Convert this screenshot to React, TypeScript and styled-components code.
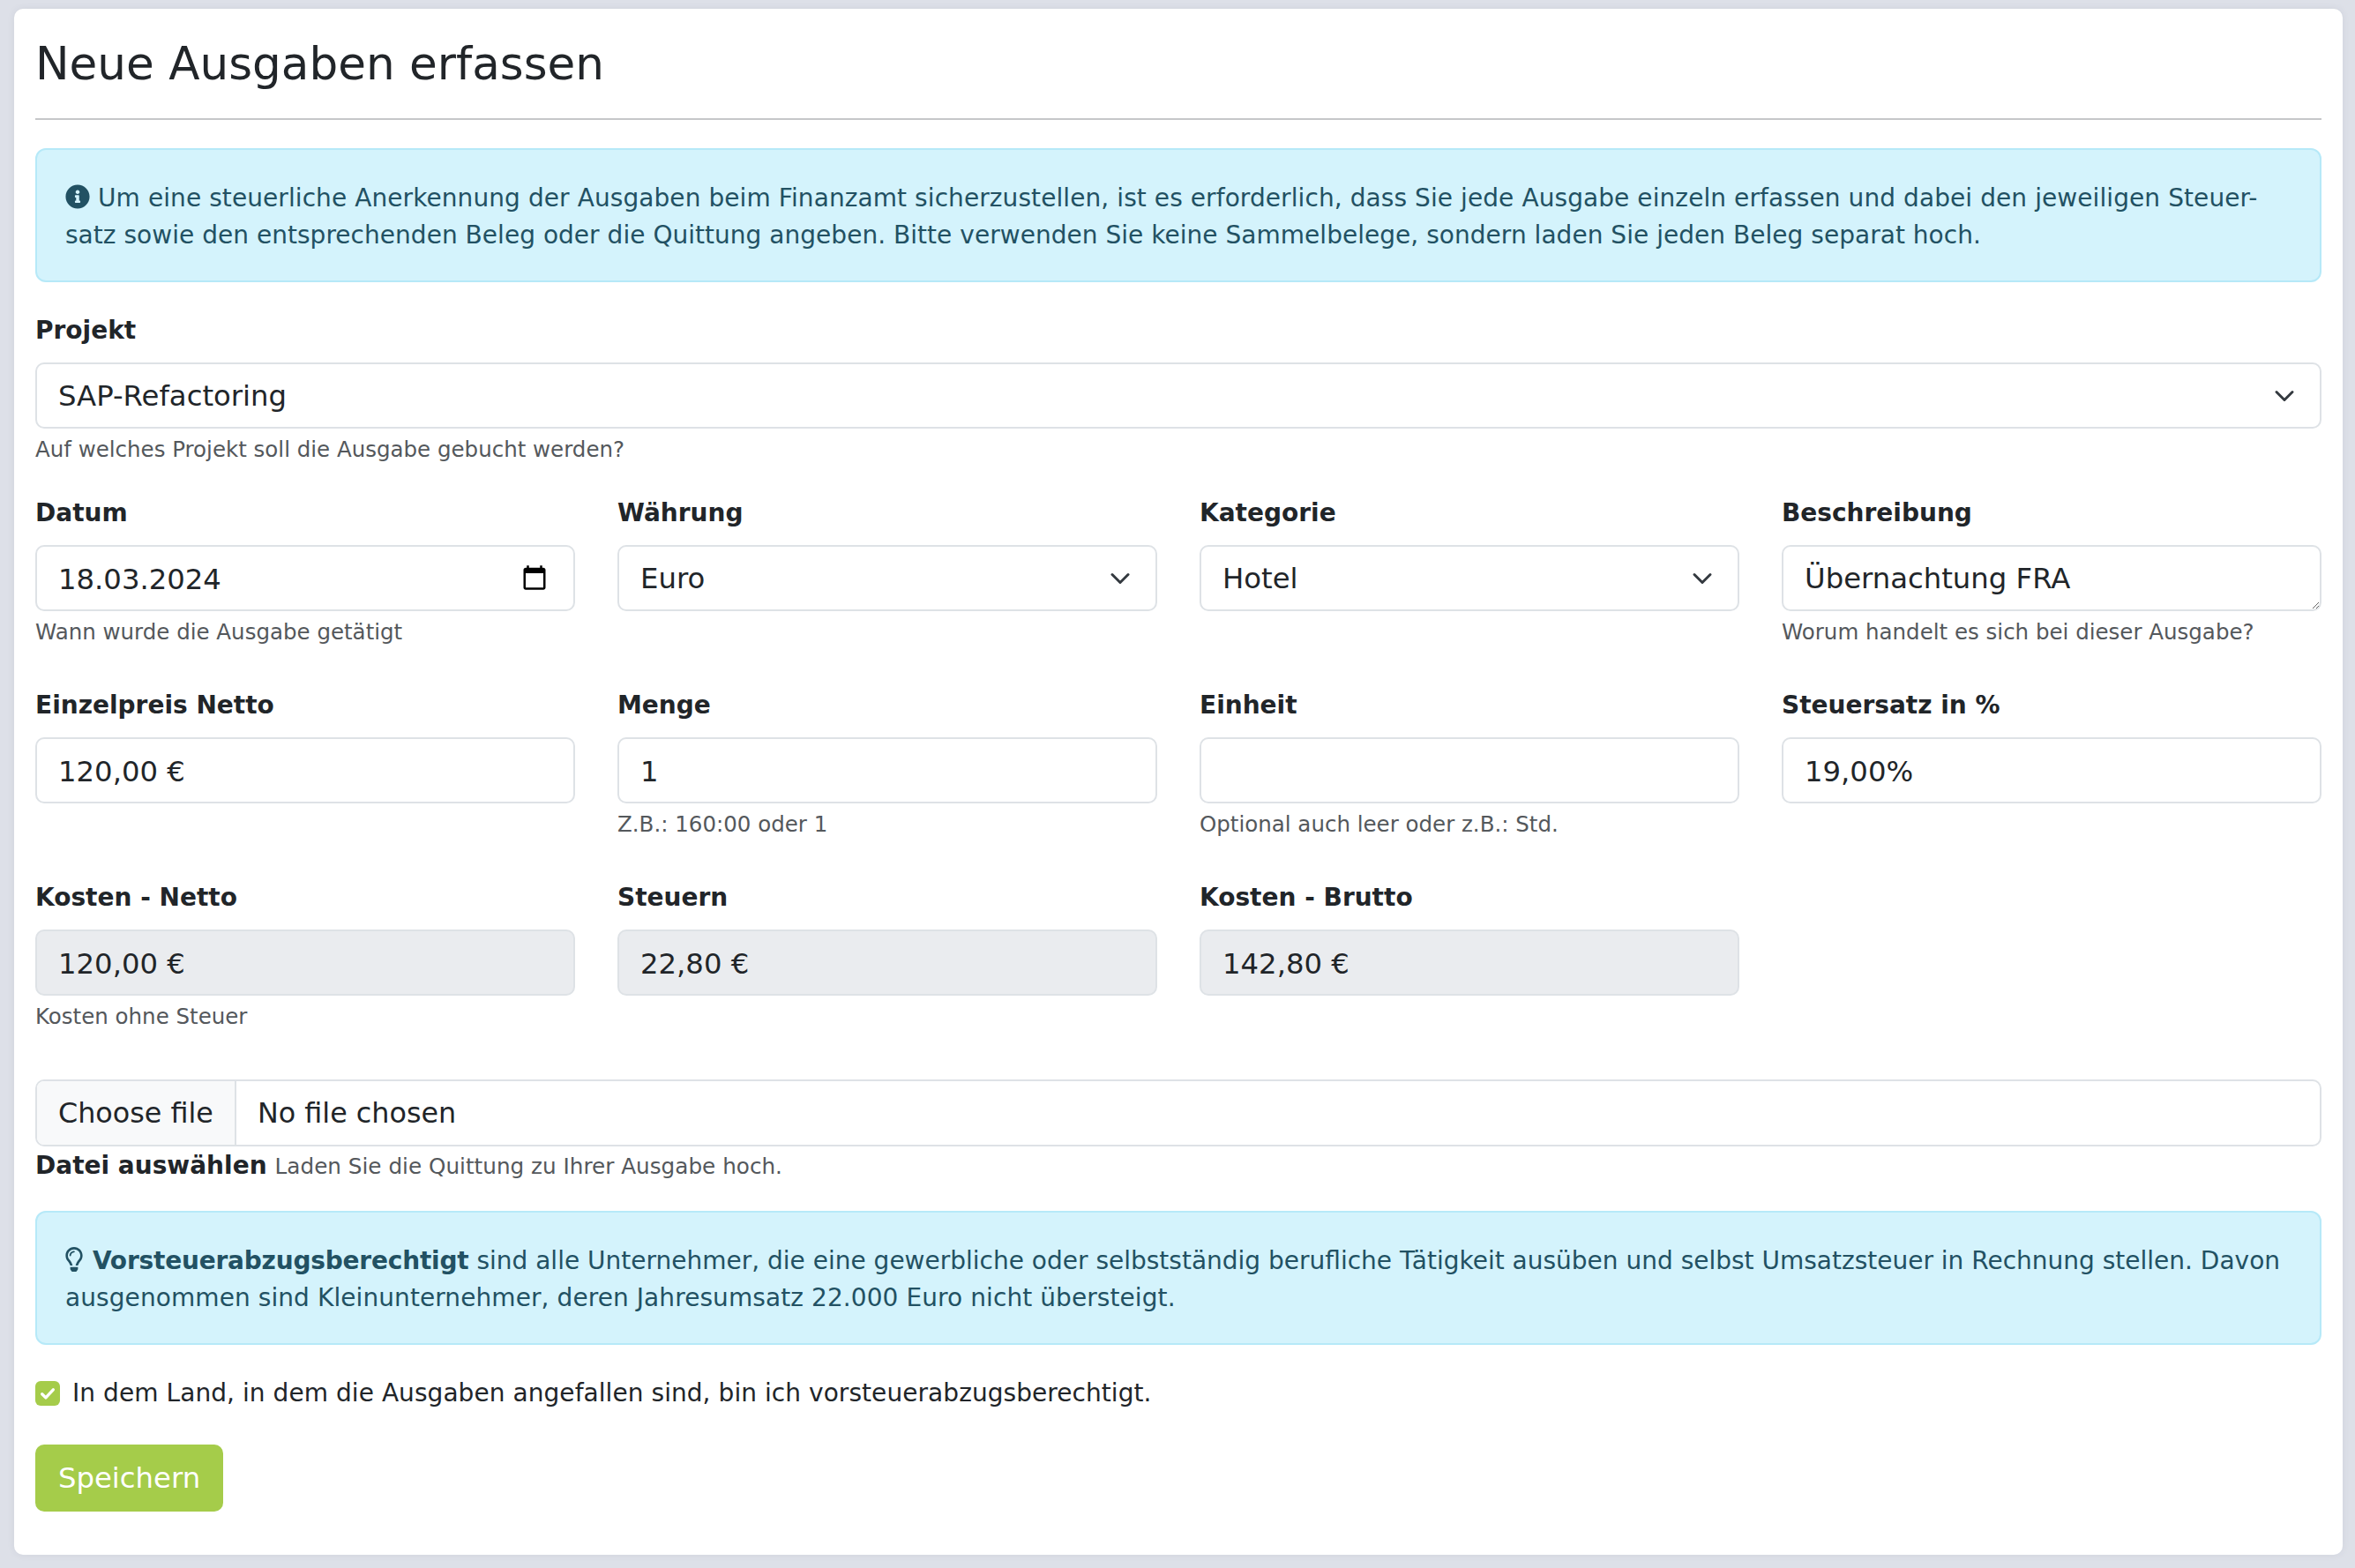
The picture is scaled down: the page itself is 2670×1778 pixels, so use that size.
import React from "react";
import styled, { createGlobalStyle } from "styled-components";
import { FaInfoCircle, FaRegLightbulb } from "react-icons/fa";

const GlobalStyle = createGlobalStyle`
  html, body {
    margin: 0;
    padding: 0;
    background: #dde0e8;
  }
  * {
    box-sizing: border-box;
  }
`;

const chevron =
  "url(\"data:image/svg+xml,%3csvg xmlns='http://www.w3.org/2000/svg' viewBox='0 0 16 16'%3e%3cpath fill='none' stroke='%23343a40' stroke-linecap='round' stroke-linejoin='round' stroke-width='2' d='m2 5 6 6 6-6'/%3e%3c/svg%3e\")";

const Page = styled.div`
  padding: 10px 14px 14px 16px;
  font-family: "DejaVu Sans", Verdana, sans-serif;
  font-size: 28px;
  line-height: 42px;
  color: #212529;
`;

const Card = styled.main`
  background: #fff;
  border-radius: 10px;
  padding: 24px 24px 49px;
  box-shadow: 0 0 8px rgba(60, 70, 90, 0.08);
`;

const Title = styled.h1`
  margin: 0;
  font-size: 51.6px;
  line-height: 76px;
  font-weight: 400;
`;

const Rule = styled.hr`
  margin: 24px 0 32px;
  border: 0;
  height: 2px;
  background: #c6c7c9;
`;

const Alert = styled.div`
  padding: 34px 32px 30px;
  background: #d4f3fc;
  border: 2px solid #b6e9f8;
  border-radius: 12px;
  color: #225163;
  svg {
    vertical-align: -3px;
  }
`;

const AlertLine = styled.span<{ $spacing: number }>`
  letter-spacing: ${(p) => p.$spacing}px;
`;

const AlertStrong = styled.b`
  letter-spacing: -0.2px;
`;

const BulbIcon = styled(FaRegLightbulb)`
  margin: 0 -2px 0 -4px;
`;

const Form = styled.form`
  display: flex;
  flex-direction: column;
`;

const ProjectField = styled.div`
  margin-top: 34px;
`;

const Grid = styled.div<{ $first?: boolean }>`
  display: grid;
  grid-template-columns: repeat(4, 1fr);
  column-gap: 48px;
  margin-top: ${(p) => (p.$first ? "33px" : "44px")};
`;

const Field = styled.div`
  display: flex;
  flex-direction: column;
  min-width: 0;
`;

const Label = styled.label`
  font-weight: 700;
  margin-bottom: 15px;
`;

const controlBase = `
  display: block;
  width: 100%;
  height: 75px;
  padding: 14px 24px 12px;
  font-family: "DejaVu Sans", Verdana, sans-serif;
  font-size: 32.3px;
  line-height: 45px;
  color: #212529;
  background-color: #fff;
  border: 2px solid #dee2e6;
  border-radius: 10px;
  outline: none;
`;

const Input = styled.input<{ $muted?: boolean }>`
  ${controlBase}
  background-color: ${(p) => (p.$muted ? "#eaecef" : "#fff")};
`;

const Select = styled.select`
  ${controlBase}
  appearance: none;
  background-image: ${chevron};
  background-repeat: no-repeat;
  background-position: right 24px center;
  background-size: 32px 24px;
`;

const TextArea = styled.textarea`
  ${controlBase}
  resize: vertical;
`;

const DateWrap = styled.div`
  position: relative;
`;

const CalendarIcon = styled.svg`
  position: absolute;
  top: 22px;
  right: 31px;
  width: 30px;
  height: 30px;
`;

const Help = styled.small`
  display: block;
  margin-top: 6px;
  font-size: 24.5px;
  line-height: 36px;
  color: #54585c;
`;

const FileField = styled.div`
  margin-top: 53px;
`;

const FileBox = styled.div`
  display: flex;
  align-items: stretch;
  height: 76px;
  overflow: hidden;
  font-size: 31.8px;
  line-height: 72px;
  border: 2px solid #dee2e6;
  border-radius: 10px;
`;

const FileButton = styled.span`
  padding: 0 24px;
  background: #f8f9fa;
  border-right: 2px solid #dee2e6;
`;

const FileName = styled.span`
  padding: 0 24px;
`;

const FileCaption = styled.div`
  margin-top: 1px;
  font-weight: 700;
`;

const InlineHelp = styled.small`
  margin-left: 9px;
  font-size: 24.7px;
  font-weight: 400;
  color: #54585c;
`;

const SecondAlert = styled(Alert)`
  margin-top: 29px;
`;

const CheckRow = styled.label`
  display: flex;
  align-items: center;
  gap: 14px;
  margin-top: 34px;
  letter-spacing: 0.06px;
`;

const CheckBox = styled.span`
  display: inline-flex;
  align-items: center;
  justify-content: center;
  width: 28px;
  height: 28px;
  background: #a5cc4a;
  border-radius: 6px;
`;

const SaveButton = styled.button`
  align-self: flex-start;
  height: 76px;
  margin-top: 37px;
  padding: 0 26px;
  font-family: "DejaVu Sans", Verdana, sans-serif;
  font-size: 32.3px;
  color: #fff;
  background: #a5cc4a;
  border: 0;
  border-radius: 10px;
`;

const App = () => {
  return (
    <Page>
      <GlobalStyle />
      <Card>
        <Title>Neue Ausgaben erfassen</Title>
        <Rule />
        <Alert>
          <AlertLine $spacing={0.08}>
            <FaInfoCircle size={28} /> Um eine steuerliche Anerkennung der Ausgaben beim Finanzamt
            sicherzustellen, ist es erforderlich, dass Sie jede Ausgabe einzeln erfassen und dabei
            den jeweiligen Steuer-
          </AlertLine>
          <br />
          <AlertLine $spacing={0.03}>
            satz sowie den entsprechenden Beleg oder die Quittung angeben. Bitte verwenden Sie keine
            Sammelbelege, sondern laden Sie jeden Beleg separat hoch.
          </AlertLine>
        </Alert>
        <Form>
          <ProjectField>
            <Field>
              <Label>Projekt</Label>
              <Select defaultValue="sap">
                <option value="sap">SAP-Refactoring</option>
              </Select>
              <Help>Auf welches Projekt soll die Ausgabe gebucht werden?</Help>
            </Field>
          </ProjectField>

          <Grid $first>
            <Field>
              <Label>Datum</Label>
              <DateWrap>
                <Input defaultValue="18.03.2024" />
                <CalendarIcon viewBox="0 0 24 24">
                  <path d="M20 3h-1V1h-2v2H7V1H5v2H4c-1.1 0-2 .9-2 2v16c0 1.1.9 2 2 2h16c1.1 0 2-.9 2-2V5c0-1.1-.9-2-2-2zm0 18H4V8h16v13z" />
                </CalendarIcon>
              </DateWrap>
              <Help>Wann wurde die Ausgabe getätigt</Help>
            </Field>
            <Field>
              <Label>Währung</Label>
              <Select defaultValue="eur">
                <option value="eur">Euro</option>
              </Select>
            </Field>
            <Field>
              <Label>Kategorie</Label>
              <Select defaultValue="hotel">
                <option value="hotel">Hotel</option>
              </Select>
            </Field>
            <Field>
              <Label>Beschreibung</Label>
              <TextArea defaultValue="Übernachtung FRA" />
              <Help>Worum handelt es sich bei dieser Ausgabe?</Help>
            </Field>
          </Grid>

          <Grid>
            <Field>
              <Label>Einzelpreis Netto</Label>
              <Input defaultValue="120,00 €" />
            </Field>
            <Field>
              <Label>Menge</Label>
              <Input defaultValue="1" />
              <Help>Z.B.: 160:00 oder 1</Help>
            </Field>
            <Field>
              <Label>Einheit</Label>
              <Input />
              <Help>Optional auch leer oder z.B.: Std.</Help>
            </Field>
            <Field>
              <Label>Steuersatz in %</Label>
              <Input defaultValue="19,00%" />
            </Field>
          </Grid>

          <Grid>
            <Field>
              <Label>Kosten - Netto</Label>
              <Input $muted readOnly defaultValue="120,00 €" />
              <Help>Kosten ohne Steuer</Help>
            </Field>
            <Field>
              <Label>Steuern</Label>
              <Input $muted readOnly defaultValue="22,80 €" />
            </Field>
            <Field>
              <Label>Kosten - Brutto</Label>
              <Input $muted readOnly defaultValue="142,80 €" />
            </Field>
          </Grid>

          <FileField>
            <FileBox>
              <FileButton>Choose file</FileButton>
              <FileName>No file chosen</FileName>
            </FileBox>
            <FileCaption>
              Datei auswählen
              <InlineHelp>Laden Sie die Quittung zu Ihrer Ausgabe hoch.</InlineHelp>
            </FileCaption>
          </FileField>

          <SecondAlert>
            <BulbIcon size={28} /> <AlertStrong>Vorsteuerabzugsberechtigt</AlertStrong> sind alle
            Unternehmer, die eine gewerbliche oder selbstständig berufliche Tätigkeit ausüben und
            selbst Umsatzsteuer in Rechnung stellen. Davon
            <br />
            <AlertLine $spacing={0.08}>
              ausgenommen sind Kleinunternehmer, deren Jahresumsatz 22.000 Euro nicht übersteigt.
            </AlertLine>
          </SecondAlert>

          <CheckRow>
            <CheckBox>
              <svg viewBox="0 0 20 20" width="30" height="30">
                <path
                  d="m5.5 10.5 3 3 6-6.5"
                  fill="none"
                  stroke="#fff"
                  strokeWidth="2.4"
                  strokeLinecap="round"
                  strokeLinejoin="round"
                />
              </svg>
            </CheckBox>
            In dem Land, in dem die Ausgaben angefallen sind, bin ich vorsteuerabzugsberechtigt.
          </CheckRow>

          <SaveButton type="button">Speichern</SaveButton>
        </Form>
      </Card>
    </Page>
  );
};

export default App;
